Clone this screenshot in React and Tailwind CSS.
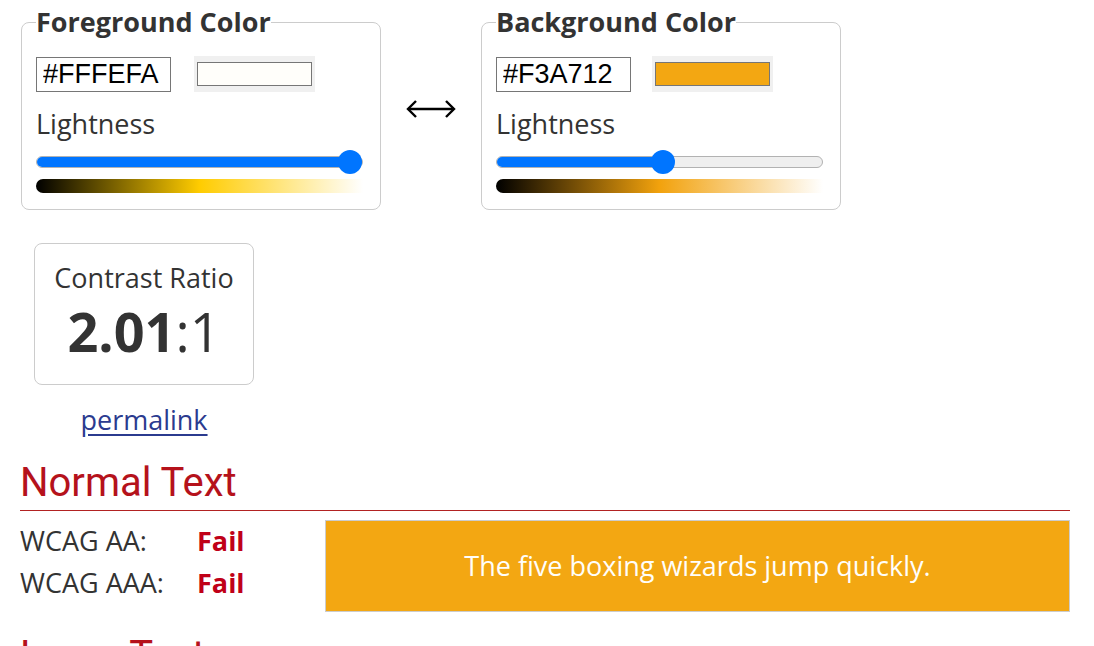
import React from "react";

function Slider({ pct, thumb }) {
  return (
    <div className="relative mt-[8px] h-[24px] w-[327px] flex items-center">
      <div className="h-[12px] w-full rounded-full border border-[#b2b2b2] bg-[#efefef] overflow-hidden">
        <div className="h-full bg-[#0075ff]" style={{ width: pct }} />
      </div>
      <div
        className="absolute top-0 h-[24px] w-[24px] rounded-full bg-[#0075ff]"
        style={{ left: thumb }}
      />
    </div>
  );
}

function ColorBox({ title, hex, swatch, mid, pct, thumb, gap }) {
  return (
    <fieldset className="w-[360px] rounded-lg border border-[#cccccc] px-[14px] pb-[16px]">
      <legend className="px-0 text-[27px] font-bold leading-[36px] text-[#333]">{title}</legend>
      <div className={`mt-[16px] flex items-center ${gap}`}>
        <input
          readOnly
          value={hex}
          className="h-[35px] w-[135px] border border-[#767676] px-[6px] font-['Liberation_Sans',Arial,sans-serif] text-[27px] text-black outline-none"
        />
        <div className="flex h-[36px] w-[121px] items-center justify-center bg-[#f0f0f0]">
          <div className="h-[24px] w-[115px] border border-[#767676]" style={{ background: swatch }} />
        </div>
      </div>
      <div className="mt-[14px] text-[27px] leading-[36px] text-[#333]">Lightness</div>
      <Slider pct={pct} thumb={thumb} />
      <div
        className="mt-[5px] h-[14px] w-[327px] rounded-l-full"
        style={{ background: `linear-gradient(to right, #000, ${mid}, #fff)` }}
      />
    </fieldset>
  );
}

export default function App() {
  return (
    <div className="min-h-screen w-[1070px] bg-white pl-5 font-['Open_Sans',sans-serif] text-[#333]">
      {/* Selectores de color */}
      <div className="flex items-center pl-px pt-[4px]">
        <ColorBox
          title="Foreground Color"
          hex="#FFFEFA"
          swatch="#FFFEFA"
          mid="#ffcc00"
          pct="100%"
          thumb={302}
          gap="gap-[23px]"
        />
        <div className="flex w-[100px] items-center justify-center pt-[4px]">
          <svg width="52" height="22" viewBox="0 0 52 22" fill="none" stroke="#000" strokeWidth="2.4">
            <path d="M3 11h46" />
            <path d="M11 3L3 11l8 8" strokeLinejoin="miter" />
            <path d="M41 3l8 8-8 8" strokeLinejoin="miter" />
          </svg>
        </div>
        <ColorBox
          title="Background Color"
          hex="#F3A712"
          swatch="#F3A712"
          mid="#f2a20d"
          pct="52%"
          thumb={155}
          gap="gap-[21px]"
        />
      </div>

      {/* Relación de contraste */}
      <div className="ml-[14px] mt-[33px] w-[220px]">
        <div className="flex h-[142px] flex-col items-center rounded-lg border border-[#cccccc] pt-[16px]">
          <div className="text-[27px] leading-[36px]">Contrast Ratio</div>
          <div className="mt-[2px] text-[54px] leading-[66px]">
            <span className="font-bold">2.01</span>:1
          </div>
        </div>
        <div className="mt-[17px] text-center">
          <a href="#" className="text-[27px] leading-[36px] text-[#2b3b8f] underline underline-offset-[4px]">
            permalink
          </a>
        </div>
      </div>

      {/* Texto normal */}
      <h2 className="mt-[21px] border-b border-[#b22222] pb-[3px] font-['Roboto',sans-serif] text-[40px] leading-[48px] text-[#b5121b]">
        Normal Text
      </h2>
      <div className="flex items-start">
        <div className="w-[305px] pt-[9px]">
          <div className="flex h-[42px] items-center text-[27px]">
            <span className="w-[177px]">WCAG AA:</span>
            <span className="font-bold text-[#c00018]">Fail</span>
          </div>
          <div className="flex h-[42px] items-center text-[27px]">
            <span className="w-[177px]">WCAG AAA:</span>
            <span className="font-bold text-[#c00018]">Fail</span>
          </div>
        </div>
        <div className="mt-[9px] flex h-[92px] flex-1 items-center justify-center border border-[#cccccc] bg-[#F3A712] text-[27px] text-[#FFFEFA]">
          The five boxing wizards jump quickly.
        </div>
      </div>

      {/* Texto grande */}
      <h2 className="mt-[20px] border-b border-[#b22222] pb-[3px] font-['Roboto',sans-serif] text-[40px] leading-[48px] text-[#b5121b]">
        Large Text
      </h2>
    </div>
  );
}
